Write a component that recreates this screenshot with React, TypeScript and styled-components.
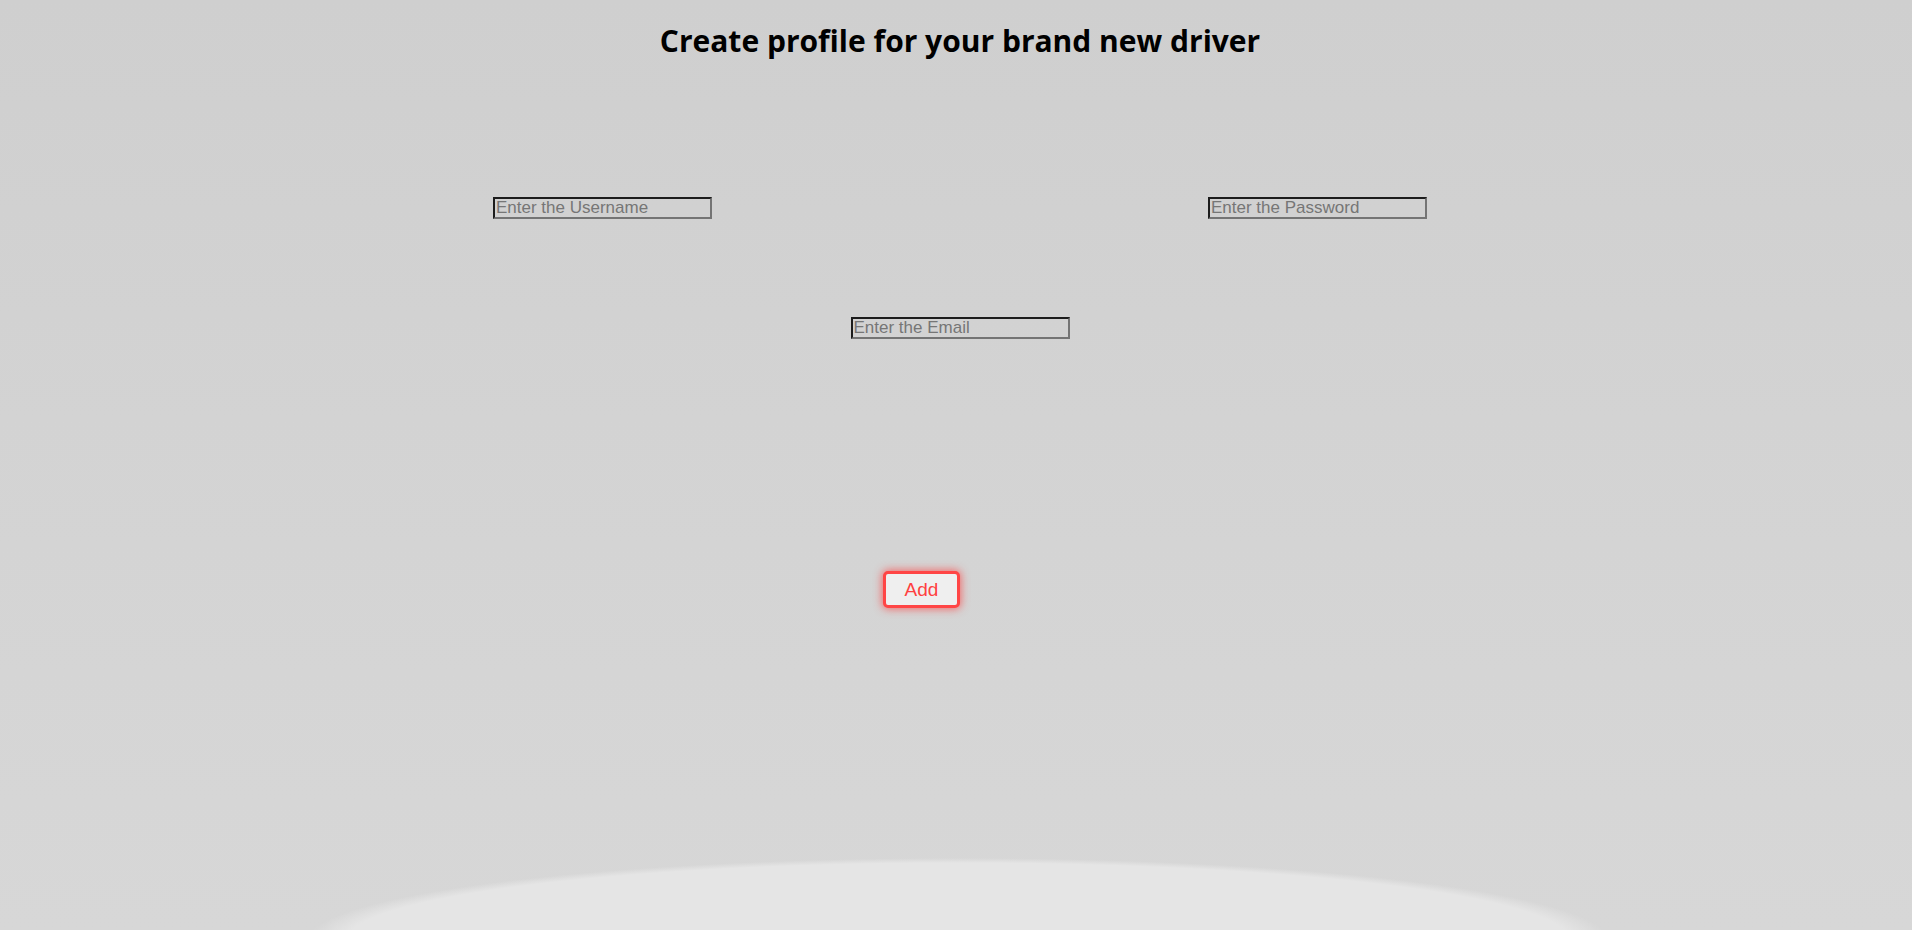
import React from "react";
import styled, { createGlobalStyle } from "styled-components";

const GlobalStyle = createGlobalStyle`
  html, body {
    margin: 0;
    padding: 0;
  }
  body {
    font-family: "Liberation Sans", Arial, sans-serif;
    overflow: hidden;
  }
`;

const Page = styled.div`
  min-height: 100vh;
  box-sizing: border-box;
  padding-left: 8px;
  background:
    radial-gradient(ellipse 650px 82px at 958px 940px, #e5e5e5 94%, rgba(229, 229, 229, 0) 100%),
    linear-gradient(180deg, #cfcfcf 0%, #d3d3d3 45%, #d7d7d7 100%);
  display: flex;
  flex-direction: column;
  align-items: center;
`;

const Title = styled.h1`
  margin: 0;
  padding-top: 22px;
  font-family: "Open Sans", "Noto Sans", sans-serif;
  font-weight: 700;
  font-size: 30px;
  line-height: 38px;
  color: #000;
`;

const Form = styled.form`
  width: 934px;
  margin-top: 137px;
  display: flex;
  flex-direction: column;
`;

const Row = styled.div<{ $justify: string }>`
  display: flex;
  justify-content: ${(p) => p.$justify};
`;

const Field = styled.input`
  box-sizing: border-box;
  width: 219px;
  height: 22px;
  padding: 0 1px;
  margin: 0;
  background: transparent;
  border-style: solid;
  border-width: 2px;
  border-color: #1c1c1c #747474 #747474 #1c1c1c;
  font-family: "Liberation Sans", Arial, sans-serif;
  font-size: 17px;
  line-height: 18px;
  color: #222;
  outline: none;
  &::placeholder {
    color: #767676;
  }
`;

const EmailRow = styled(Row)`
  margin-top: 98px;
`;

const ButtonRow = styled(Row)`
  margin-top: 232px;
  padding-right: 77px;
`;

const AddButton = styled.button`
  box-sizing: border-box;
  width: 77px;
  height: 37px;
  background: #efefef;
  border: 3px solid #ff4545;
  border-radius: 5px;
  box-shadow: 0 0 8px 1px rgba(255, 60, 60, 0.7);
  color: #ff4040;
  font-family: "Liberation Sans", Arial, sans-serif;
  font-size: 19px;
  padding: 0;
  cursor: pointer;
`;

export default function App() {
  return (
    <>
      <GlobalStyle />
      <Page>
        <Title>Create profile for your brand new driver</Title>
        <Form onSubmit={(e) => e.preventDefault()}>
          <Row $justify="space-between">
            <Field type="text" placeholder="Enter the Username" />
            <Field type="password" placeholder="Enter the Password" />
          </Row>
          <EmailRow $justify="center">
            <Field type="email" placeholder="Enter the Email" />
          </EmailRow>
          <ButtonRow $justify="center">
            <AddButton type="submit">Add</AddButton>
          </ButtonRow>
        </Form>
      </Page>
    </>
  );
}
